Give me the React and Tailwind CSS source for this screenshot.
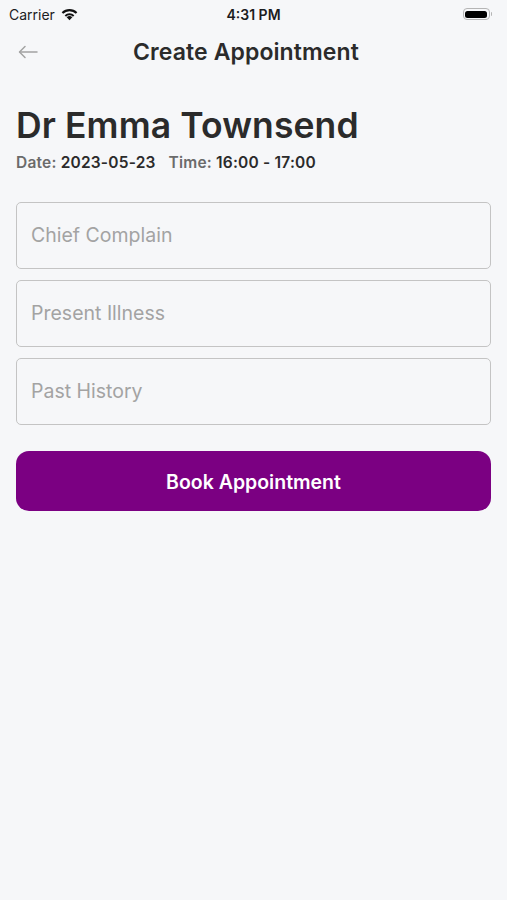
import React from 'react';

const font = { fontFamily: 'Inter, "Noto Sans", sans-serif' };

const StatusBar = () => (
  <div className="relative flex h-[28px] items-center justify-between px-[9px]">
    <div className="flex items-center gap-[5px]">
      <span className="text-[14px] text-[#1c1c1e]">Carrier</span>
      <svg width="19" height="14" viewBox="0 0 18 13">
        <path d="M9 12.5 L6.3 9.6 A4 4 0 0 1 11.7 9.6 Z" fill="#111" />
        <path d="M4.4 7.6 A6.6 6.6 0 0 1 13.6 7.6 L12.3 9 A4.8 4.8 0 0 0 5.7 9 Z" fill="#111" />
        <path d="M1.6 4.9 A10.4 10.4 0 0 1 16.4 4.9 L15 6.3 A8.4 8.4 0 0 0 3 6.3 Z" fill="#111" />
      </svg>
    </div>
    <span className="absolute left-1/2 -translate-x-1/2 text-[14px] font-semibold text-[#1c1c1e]">4:31 PM</span>
    <div className="flex items-center mr-[6px]">
      <div className="flex h-[12px] w-[27px] items-center rounded-[4px] border border-[#b5b5b5] p-[1.5px]">
        <div className="h-full w-full rounded-[2.5px] bg-black" />
      </div>
      <div className="ml-[1px] h-[4px] w-[1.5px] rounded-r-sm bg-[#b5b5b5]" />
    </div>
  </div>
);

export default function App() {
  return (
    <div className="min-h-[900px] w-full bg-[#f6f7f9]" style={font}>
      <StatusBar />

      <div className="relative flex h-[48px] items-center justify-center">
        <svg className="absolute left-[18px] top-[17px]" width="20" height="14" viewBox="0 0 20 14" fill="none" stroke="#a3a3a3" strokeWidth="1.5" strokeLinecap="round" strokeLinejoin="round">
          <path d="M19 7H2" />
          <path d="M7 1.5L1.5 7L7 12.5" />
        </svg>
        <h1 className="text-[23px] font-semibold text-[#2b2b2b] -ml-[15px] tracking-[0.1px]">Create Appointment</h1>
      </div>

      <div className="px-4 pt-[30px]">
        <h2 className="text-[35.5px] font-semibold leading-[40px] text-[#2b2b2b] tracking-[0.1px]">Dr Emma Townsend</h2>
        <div className="mt-[5px] flex items-center gap-[13px] text-[15.5px] font-semibold tracking-[0.2px]">
          <span>
            <span className="text-[#6b6b6b]">Date: </span>
            <span className="text-[#2b2b2b]">2023-05-23</span>
          </span>
          <span>
            <span className="text-[#6b6b6b]">Time: </span>
            <span className="text-[#2b2b2b]">16:00 - 17:00</span>
          </span>
        </div>

        <div className="mt-[28px] flex flex-col gap-[11px]">
          {['Chief Complain', 'Present Illness', 'Past History'].map((p) => (
            <input
              key={p}
              placeholder={p}
              className="h-[67px] w-full rounded-[5px] border-[1.5px] border-[#c4c4c4] bg-[#f6f7f9] px-[14px] pb-[2px] text-[19.5px] text-[#2b2b2b] placeholder:text-[#a3a3a3] outline-none"
              style={font}
            />
          ))}
        </div>

        <button className="mt-[26px] flex h-[60px] w-full items-center justify-center rounded-[13px] bg-[#7b0082] pt-[3px] text-[19.5px] font-semibold text-white">
          Book Appointment
        </button>
      </div>
    </div>
  );
}
